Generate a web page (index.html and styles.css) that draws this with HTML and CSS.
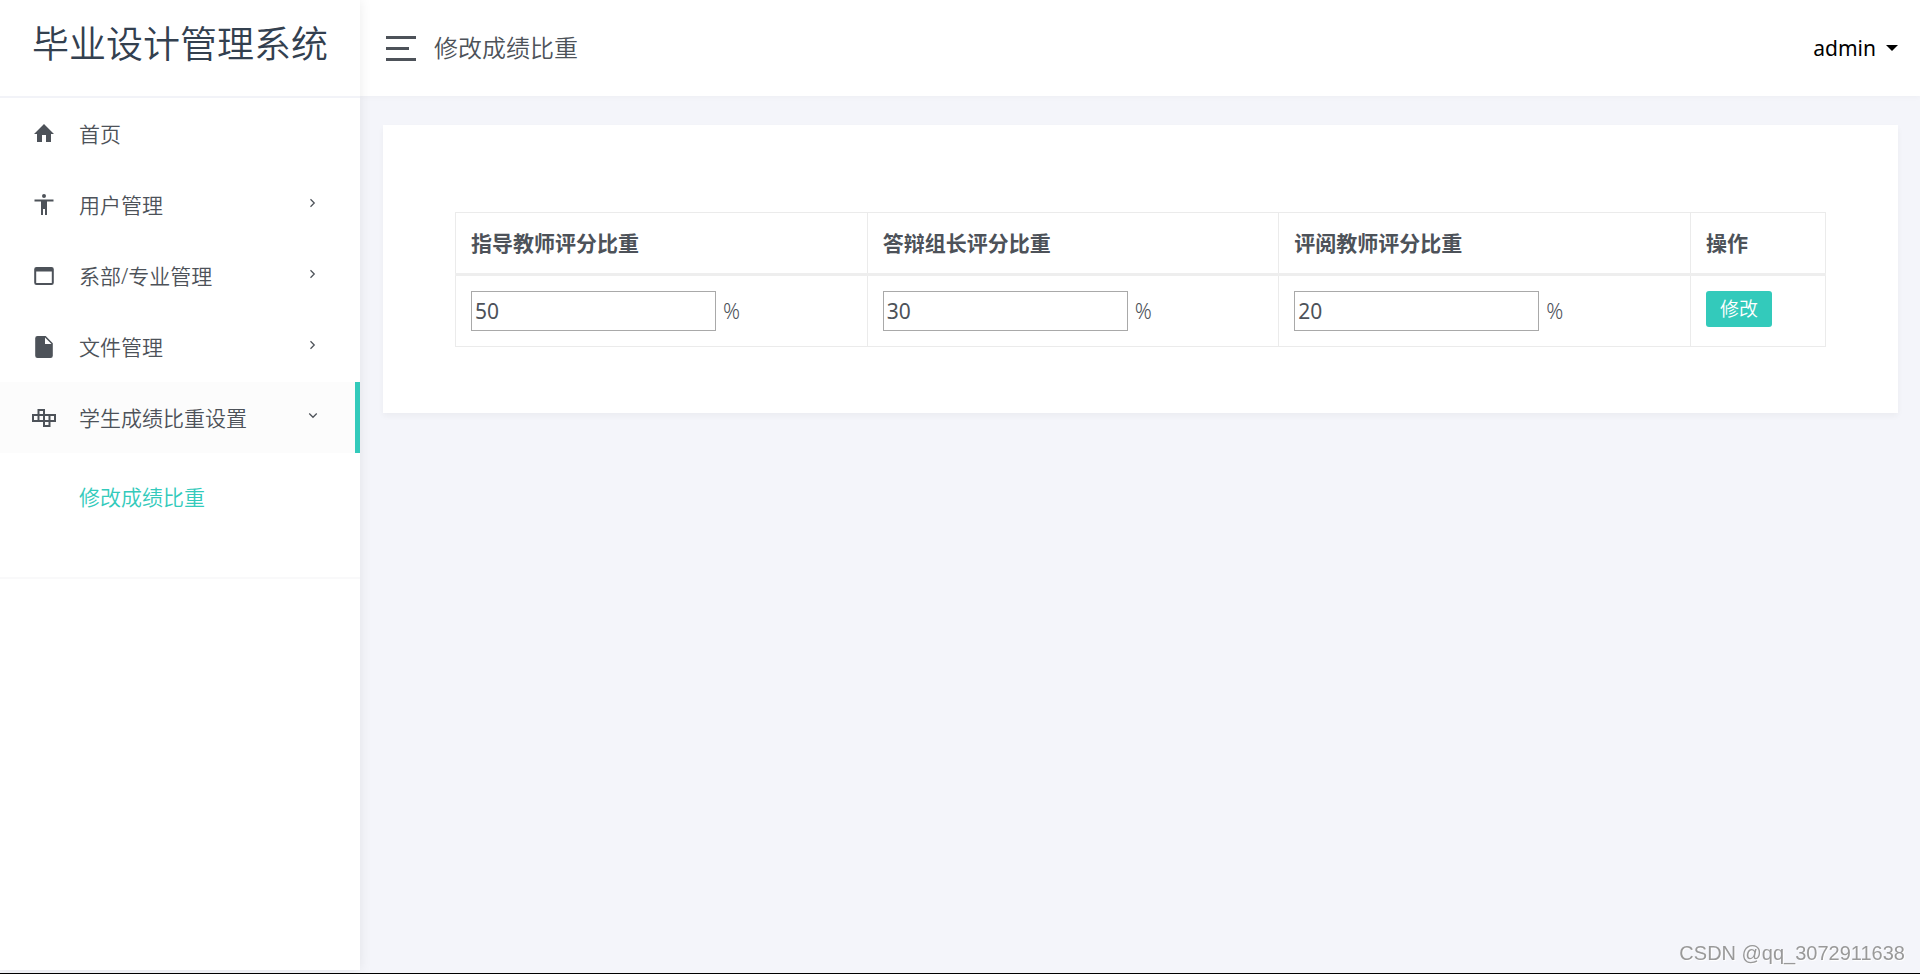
FILE: index.html
```html
<!DOCTYPE html>
<html lang="zh-CN">
<head>
<meta charset="utf-8">
<title>毕业设计管理系统</title>
<link rel="stylesheet" href="styles.css">
</head>
<body>
<div class="layout">
  <aside class="sidebar">
    <div class="brand"><a href="#">毕业设计管理系统</a></div>
    <nav class="menu">
      <ul class="menu-list">
        <li><a class="menu-link" href="#">
          <svg class="icon" viewBox="0 0 24 24"><path d="M10 20v-7h4v7h5v-8h3L12 2 2 12h3v8z"/></svg>
          <span>首页</span></a></li>
        <li><a class="menu-link" href="#">
          <svg class="icon" viewBox="0 0 24 24"><path d="M12 1a2 2 0 1 1 0 4 2 2 0 0 1 0-4zM21.500 8.500H15V22h-2v-6h-2v6H9V8.500H2.500v-2h19z"/></svg>
          <span>用户管理</span>
          <svg class="chevron" viewBox="0 0 8 8"><path d="M2 1l3 3-3 3"/></svg></a></li>
        <li><a class="menu-link" href="#">
          <svg class="icon" viewBox="0 0 24 24"><path d="M19.500 3h-15A2.300 2.300 0 0 0 2.200 5.300v13.400A2.300 2.300 0 0 0 4.500 21h15a2.300 2.300 0 0 0 2.300-2.300V5.300A2.300 2.300 0 0 0 19.500 3zm.3 16H4.200V7.500h15.600z"/></svg>
          <span>系部/专业管理</span>
          <svg class="chevron" viewBox="0 0 8 8"><path d="M2 1l3 3-3 3"/></svg></a></li>
        <li><a class="menu-link" href="#">
          <svg class="icon" viewBox="0 0 24 24"><path d="M13 9V2.500L19.500 9M5.500 1A2.300 2.300 0 0 0 3.200 3.300v17.400A2.300 2.300 0 0 0 5.500 23h13a2.300 2.300 0 0 0 2.300-2.300V8.200L13.700 1z"/></svg>
          <span>文件管理</span>
          <svg class="chevron" viewBox="0 0 8 8"><path d="M2 1l3 3-3 3"/></svg></a></li>
        <li><a class="menu-link active" href="#">
          <svg class="icon outline" viewBox="0 0 24 24"><path d="M1 9h22v6H1zM6.500 4h5.500v11H6.500zM12 9h5.500v11H12z"/></svg>
          <span>学生成绩比重设置</span>
          <svg class="chevron" viewBox="0 0 8 8"><path d="M1 2l3 3 3-3"/></svg></a>
          <ul class="submenu"><li><a href="#">修改成绩比重</a></li></ul></li>
      </ul>
    </nav>
  </aside>
  <div class="page">
    <header class="topbar">
      <button class="toggle" type="button" aria-label="菜单"><span></span><span></span><span></span></button>
      <h1 class="page-title">修改成绩比重</h1>
      <button class="user" type="button">admin<span class="caret"></span></button>
    </header>
    <main class="content">
      <section class="card">
        <table class="weights">
          <colgroup><col><col><col><col class="actions"></colgroup>
          <thead><tr>
            <th id="guide">指导教师评分比重</th><th id="leader">答辩组长评分比重</th><th id="reviewer">评阅教师评分比重</th><th>操作</th>
          </tr></thead>
          <tbody><tr>
            <td><div class="field"><input type="text" value="50" aria-labelledby="guide"><span>%</span></div></td>
            <td><div class="field"><input type="text" value="30" aria-labelledby="leader"><span>%</span></div></td>
            <td><div class="field"><input type="text" value="20" aria-labelledby="reviewer"><span>%</span></div></td>
            <td><button class="edit" type="button">修改</button></td>
          </tr></tbody>
        </table>
      </section>
    </main>
  </div>
</div>
<div class="watermark">CSDN @qq_3072911638</div>
</body>
</html>
```
FILE: styles.css
```css
* { box-sizing: border-box; }

body {
  margin: 0;
  background: #f4f5fa;
  color: #4d5259;
  font-family: "Noto Sans", "Noto Sans CJK SC", sans-serif;
  font-size: 21px;
  font-weight: 350;
  line-height: 30px;
}

a { color: inherit; text-decoration: none; }
ul { list-style: none; margin: 0; padding: 0; }
button, input { font: inherit; color: inherit; }

.layout {
  display: flex;
  min-height: 100vh;
  border-bottom: 1px solid #000;
}

.sidebar {
  flex: none;
  width: 360px;
  margin-bottom: 3px;
  background: #fff;
  box-shadow: 0 0 12px rgba(0, 0, 0, 0.08);
  z-index: 2;
}

.brand {
  height: 98px;
  padding-top: 16px;
  border-bottom: 2px solid #f2f3f8;
  color: #33404f;
  font-size: 37px;
  line-height: 56px;
  text-align: center;
}

.menu {
  padding-bottom: 45px;
  border-bottom: 2px solid #f9f9fa;
}

.menu-link {
  display: flex;
  align-items: center;
  height: 71px;
  padding: 0 37px 0 32px;
  border-right: 5px solid transparent;
}

.menu-link.active {
  background: #fcfcfc;
  border-right-color: #33cabb;
}

.icon {
  width: 24px;
  height: 24px;
  margin-right: 23px;
  fill: #4d5259;
  fill-rule: evenodd;
}

.icon.outline, .chevron {
  fill: none;
  stroke: #4d5259;
}

.icon.outline { stroke-width: 2; }

.chevron {
  width: 10px;
  height: 10px;
  margin: 0 0 4px auto;
}

.submenu { padding: 29px 0 20px 79px; }
.submenu a { color: #33cabb; }

.page { flex: 1; min-width: 0; }

.topbar {
  display: flex;
  align-items: center;
  height: 96px;
  padding: 0 22px 0 26px;
  background: #fff;
  box-shadow: 0 1px 6px rgba(0, 0, 0, 0.03);
}

.toggle {
  display: flex;
  flex-direction: column;
  gap: 8px;
  width: 30px;
  padding: 0;
  border: 0;
  background: none;
}

.toggle span { width: 100%; height: 3px; background: #4d5259; }
.toggle span:nth-child(2) { width: 75%; }

.page-title {
  margin: 0 auto 0 18px;
  font-size: 24px;
  font-weight: 350;
}

.user {
  display: flex;
  align-items: center;
  gap: 10px;
  padding: 0;
  border: 0;
  background: none;
  color: #000;
  font-weight: 400;
}

.caret {
  border: 6px solid transparent;
  border-top-color: #000;
  border-bottom: 0;
}

.content { padding: 29px 22px 29px 23px; }

.card {
  padding: 87px 72px 66px;
  background: #fff;
  box-shadow: 0 3px 6px rgba(0, 0, 0, 0.04);
}

.weights {
  width: 100%;
  table-layout: fixed;
  border-collapse: collapse;
}

.actions { width: 135px; }

.weights th, .weights td {
  padding: 15px;
  border: 1px solid #ebebeb;
  text-align: left;
  vertical-align: top;
}

.weights th {
  border-bottom: 3px solid #eee;
  font-weight: 700;
}

.field { display: flex; align-items: center; gap: 7px; }

.field input {
  width: 245px;
  height: 40px;
  padding: 0 3px;
  border: 1px solid #a9a9a9;
  border-radius: 0;
  background: #fff;
  font-weight: 400;
}

.edit {
  display: block;
  height: 36px;
  padding: 0 14px;
  border: 0;
  border-radius: 3px;
  background: #33cabb;
  color: #fff;
  font-size: 19px;
}

.watermark {
  position: fixed;
  right: 15px;
  bottom: 9px;
  color: #999;
  font: 20px/24px "Liberation Sans", sans-serif;
  text-shadow: 1px 1px 1px #fff;
}
```
